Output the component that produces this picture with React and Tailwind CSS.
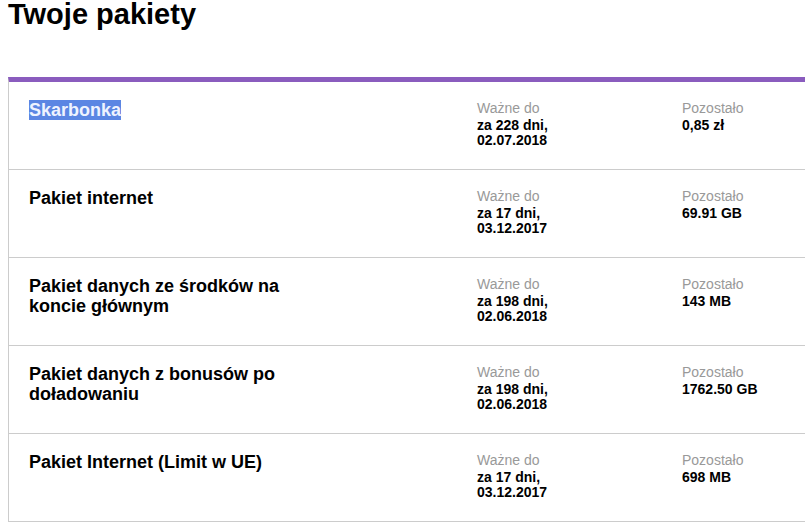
const packages = [
  { name: "Skarbonka", days: "za 228 dni,", date: "02.07.2018", left: "0,85 zł", selected: true },
  { name: "Pakiet internet", days: "za 17 dni,", date: "03.12.2017", left: "69.91 GB" },
  { name: "Pakiet danych ze środków na koncie głównym", days: "za 198 dni,", date: "02.06.2018", left: "143 MB" },
  { name: "Pakiet danych z bonusów po doładowaniu", days: "za 198 dni,", date: "02.06.2018", left: "1762.50 GB" },
  { name: "Pakiet Internet (Limit w UE)", days: "za 17 dni,", date: "03.12.2017", left: "698 MB" },
];

const App = () => {
  return (
    <div className="w-full h-[526px] overflow-hidden bg-white text-black font-['Liberation_Sans',Arial,sans-serif]">
      <h1 className="ml-2 text-[29px] leading-[28px] font-bold">Twoje pakiety</h1>
      <div className="ml-2 mt-[49px] w-[900px] border-t-[5px] border-t-[#8a5cbe] border-l border-l-[#cccccc]">
        {packages.map((p) => (
          <div key={p.name} className="flex h-[88px] border-b border-b-[#cccccc] pt-[17px] pl-5">
            <div className="w-[448px] shrink-0 pt-[1px]">
              <div className="max-w-[270px] text-[18px] font-bold leading-[20px]">
                {p.selected ? (
                  <span className="bg-[#5b86e3] text-[#eef3ff]">{p.name}</span>
                ) : (
                  p.name
                )}
              </div>
            </div>
            <div className="w-[205px] shrink-0 text-[14px]">
              <div className="text-[#999999] leading-[19px]">Ważne do</div>
              <div className="font-bold leading-[15px]">
                {p.days}
                <br />
                {p.date}
              </div>
            </div>
            <div className="text-[14px]">
              <div className="text-[#999999] leading-[19px]">Pozostało</div>
              <div className="font-bold leading-[15px]">{p.left}</div>
            </div>
          </div>
        ))}
      </div>
    </div>
  );
};

export default App;
